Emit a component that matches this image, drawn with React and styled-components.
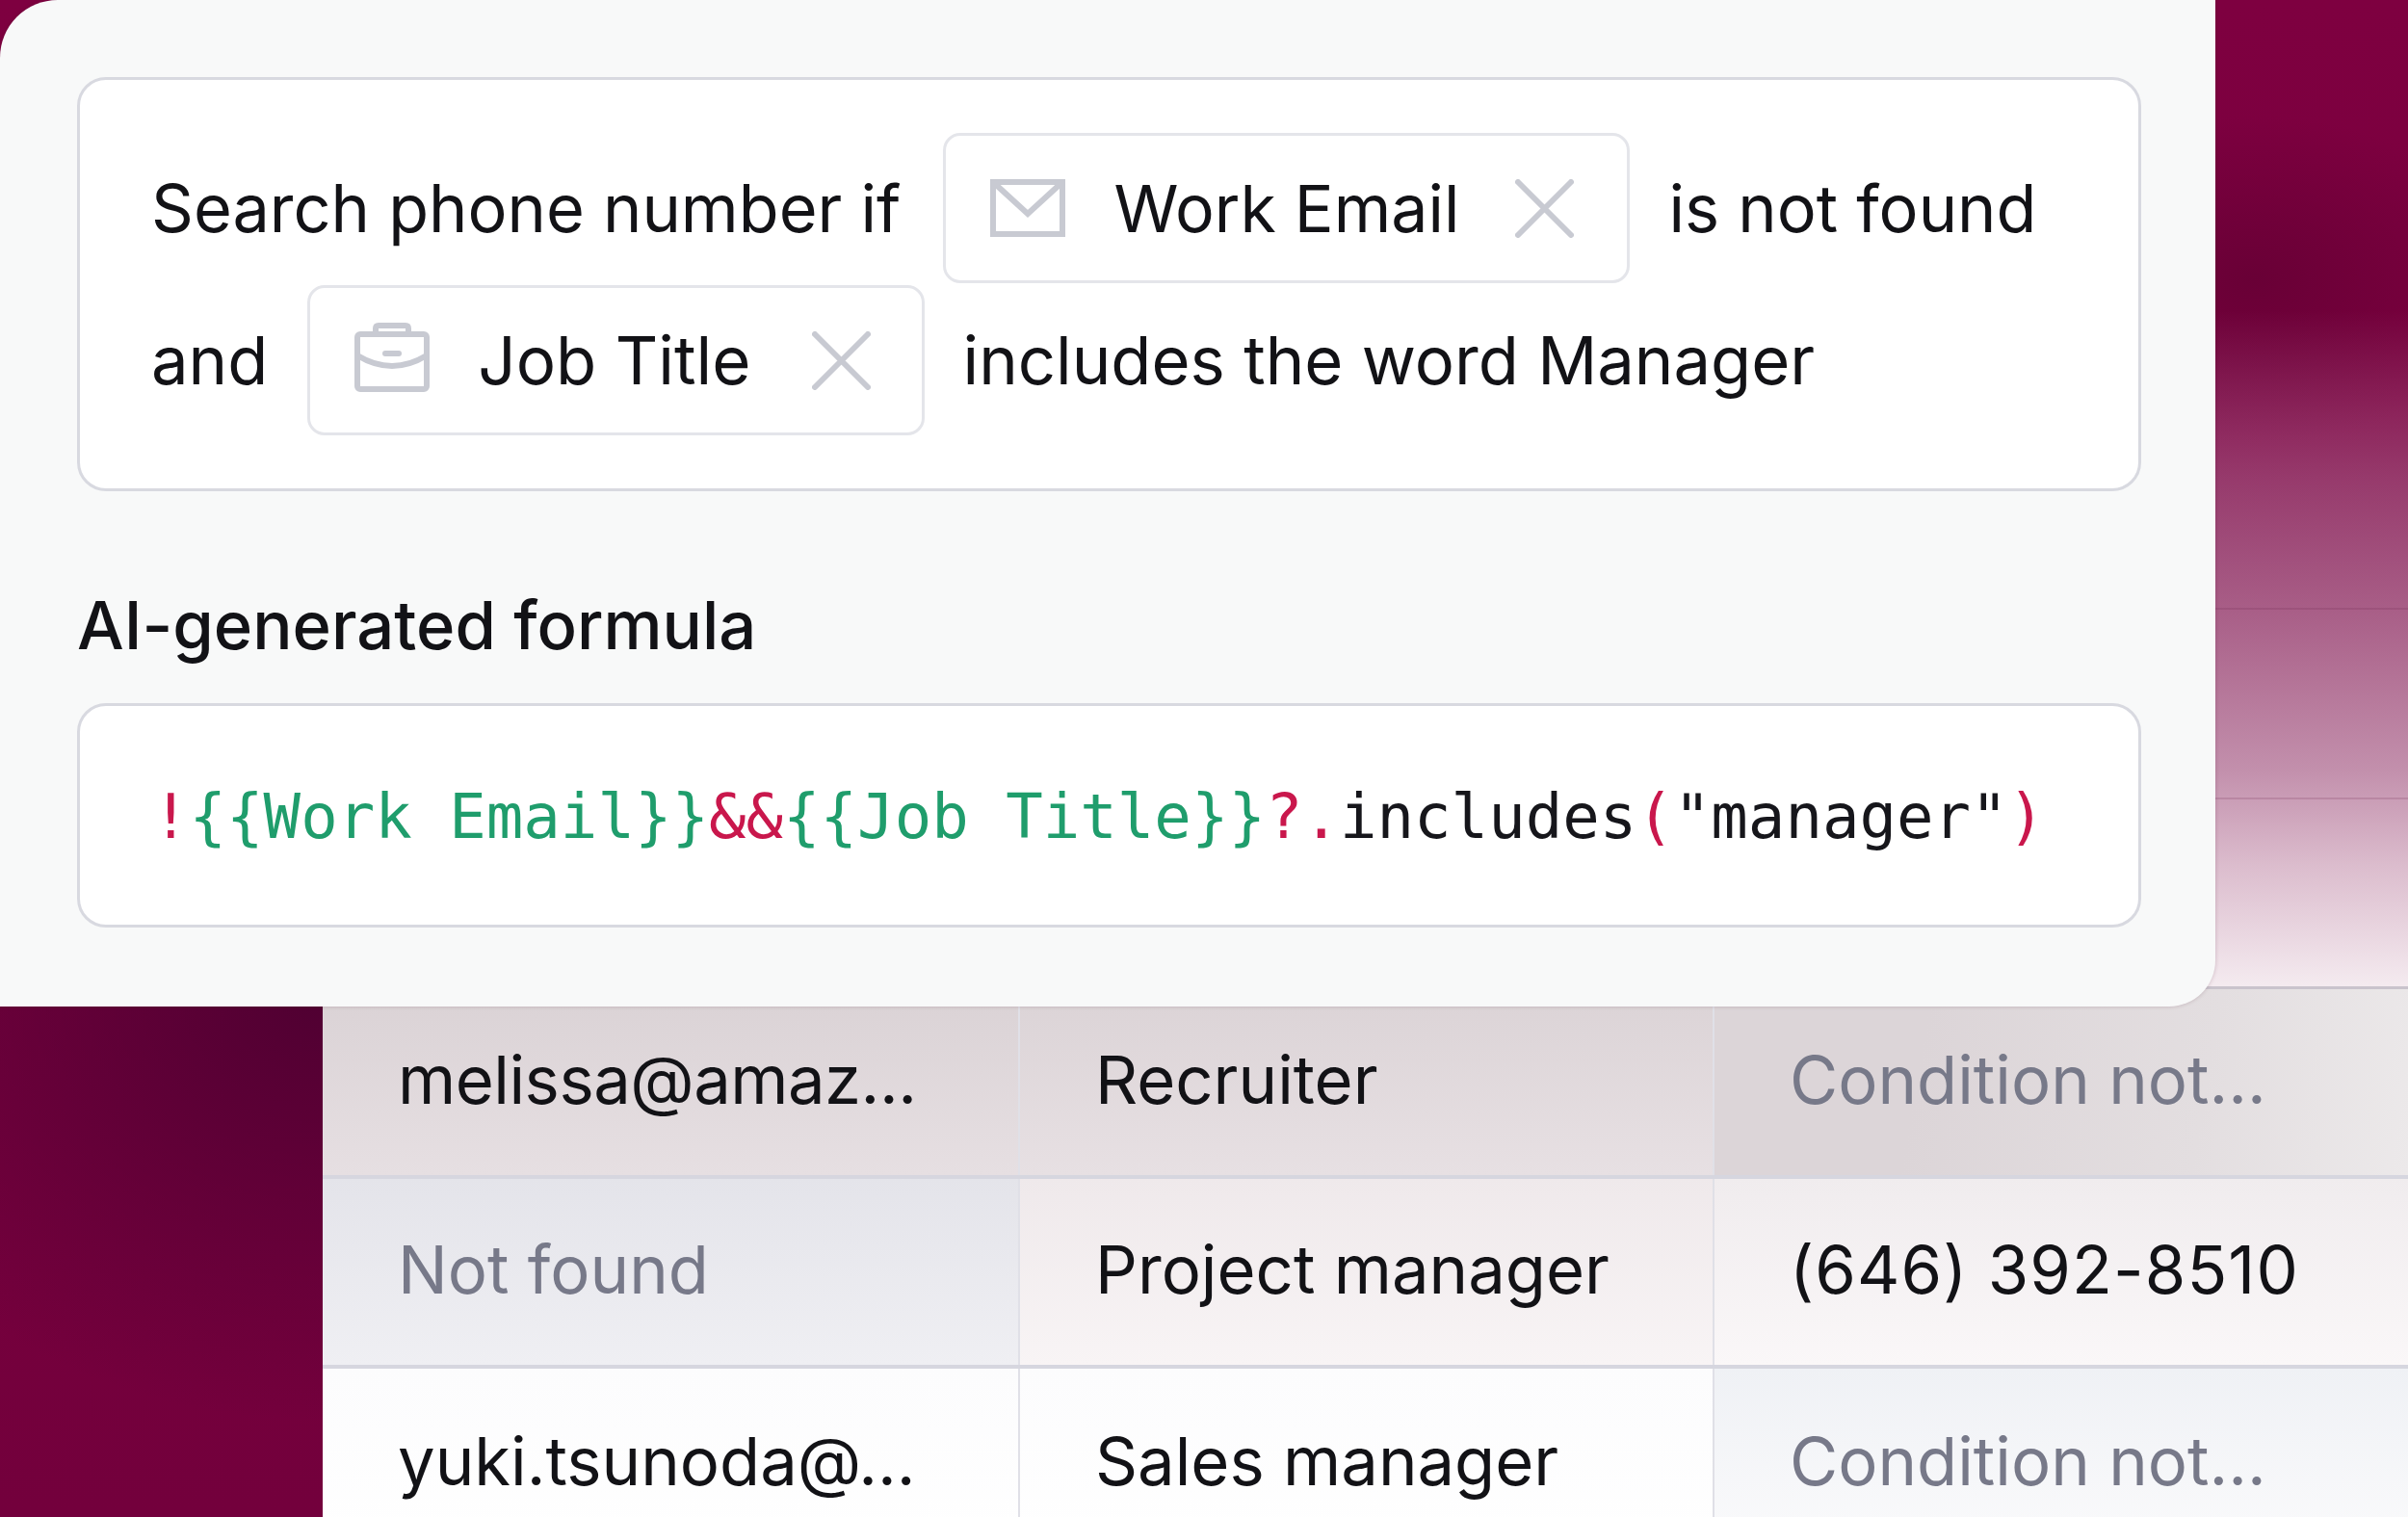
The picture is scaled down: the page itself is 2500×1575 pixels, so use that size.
import React from "react";
import styled, { createGlobalStyle } from "styled-components";

const GlobalStyle = createGlobalStyle`
  html, body {
    margin: 0;
    padding: 0;
    background: #77003c;
  }
  body {
    font-family: "Inter", "Liberation Sans", sans-serif;
  }
`;

const Stage = styled.div`
  position: relative;
  width: 2500px;
  height: 1575px;
  overflow: hidden;
  padding: 42px 0 0 335px;
  box-sizing: border-box;
  background:
    radial-gradient(ellipse 540px 440px at 330px 1035px, #500032 0%, rgba(80, 0, 50, 0) 100%),
    radial-gradient(ellipse 260px 170px at 2340px 290px, #690036 0%, rgba(105, 0, 54, 0) 100%),
    linear-gradient(180deg, #7e0040 0%, #73003c 100%);
`;

const Table = styled.div`
  display: flex;
  flex-direction: column;
  background: linear-gradient(
    180deg,
    rgba(225, 215, 230, 0) 280px,
    rgba(225, 215, 230, 0.12) 358px,
    rgba(228, 218, 232, 0.27) 458px,
    rgba(232, 222, 234, 0.42) 588px,
    rgba(236, 226, 236, 0.5) 658px,
    rgba(240, 232, 240, 0.62) 758px,
    rgba(248, 242, 246, 0.78) 858px,
    rgba(255, 255, 255, 0.92) 983px
  );
`;

const Row = styled.div`
  display: grid;
  grid-template-columns: 724px 721px 720px;
  height: ${(p) => p.$height}px;
  box-sizing: border-box;
  border-bottom: ${(p) => p.$line};
`;

const Cell = styled.div`
  display: flex;
  align-items: center;
  padding: 0 0 4px 78px;
  box-sizing: border-box;
  border-right: ${(p) => (p.$ruled ? "2px solid #e0e0e7" : "none")};
  font-size: 68.75px;
  line-height: 1;
  white-space: nowrap;
  letter-spacing: ${(p) => p.$spacing || 0}px;
  color: ${(p) => (p.$muted ? "#777989" : "#121216")};
  background: ${(p) => p.$fill || "none"};
`;

const Panel = styled.section`
  position: absolute;
  top: 0;
  left: 0;
  width: 2300px;
  height: 1045px;
  padding: 80px 77px 0 80px;
  box-sizing: border-box;
  background: #f8f9f9;
  border-radius: 60px 0 48px 0;
  box-shadow: 0 0 4px rgba(60, 0, 30, 0.2);
`;

const Card = styled.div`
  box-sizing: border-box;
  background: #fff;
  border: 3px solid #d8d9e0;
  border-radius: 30px;
`;

const ConditionCard = styled(Card)`
  height: 430px;
  padding: 55px 74px;
  display: flex;
  flex-direction: column;
  gap: 2px;
`;

const Line = styled.div`
  display: flex;
  align-items: center;
  gap: 40px;
  height: 156px;
  font-size: ${(p) => p.$size}px;
  color: #121216;
  white-space: nowrap;
`;

const Chip = styled.div`
  display: flex;
  align-items: center;
  height: 156px;
  box-sizing: border-box;
  margin-left: ${(p) => p.$nudge || 0}px;
  padding: 0 ${(p) => p.$right}px 0 46px;
  background: #fff;
  border: 3px solid #e4e5ea;
  border-radius: 18px;
`;

const ChipLabel = styled.span`
  margin: 0 ${(p) => p.$after}px 0 ${(p) => p.$before}px;
  font-size: ${(p) => p.$size}px;
`;

const Glyph = styled.svg`
  display: block;
  flex: none;
  fill: none;
  stroke: #c8cad2;
  stroke-width: 6;
`;

const FormulaLabel = styled.h2`
  margin: 95px 0 37px;
  font-size: 68.75px;
  font-weight: 500;
  line-height: 88px;
  color: #121216;
`;

const FormulaCard = styled(Card)`
  height: 233px;
  padding: 2px 75px 0;
  display: flex;
  align-items: center;
`;

const Code = styled.code`
  font-family: "DejaVu Sans Mono", "Liberation Mono", monospace;
  font-size: 64px;
  white-space: pre;
  color: #16161b;
`;

const Tok = styled.span`
  color: ${(p) => (p.$kind === "green" ? "#1f9d6c" : "#c9174c")};
`;

const MailIcon = () => (
  <Glyph width="78" height="60" viewBox="0 0 78 60">
    <rect x="3" y="3" width="72" height="54" />
    <path d="M3 3 L39 36 L75 3" />
  </Glyph>
);

const CaseIcon = () => (
  <Glyph width="78" height="78" viewBox="0 0 78 78">
    <rect x="3" y="12" width="72" height="57" rx="3" />
    <path d="M22 12 V6 Q22 3 25 3 H53 Q56 3 56 6 V12" />
    <path d="M3 34 Q39 56 75 34" />
    <path d="M32 32 H46" strokeLinecap="round" />
  </Glyph>
);

const CloseIcon = () => (
  <Glyph width="61" height="61" viewBox="0 0 61 61">
    <path d="M3 3 L58 58 M58 3 L3 58" strokeLinecap="round" />
  </Glyph>
);

const softLine = "4px solid #d6d6df";

const rows = [
  { height: 591, line: "2px solid rgba(110, 40, 80, 0.2)" },
  { height: 197, line: "2px solid rgba(110, 40, 80, 0.18)" },
  { height: 197, line: "3px solid rgba(190, 185, 195, 0.8)" },
  {
    height: 197,
    line: softLine,
    cells: [
      { text: "melissa@amaz...", spacing: -0.5, fill: "linear-gradient(180deg, #dad2d5, #e6dfe2)" },
      { text: "Recruiter", fill: "linear-gradient(180deg, #dbd3d6, #e7e0e3)" },
      {
        text: "Condition not...",
        muted: true,
        fill: "linear-gradient(100deg, #dcd5d8 30%, #e3dee0 70%, #ece9ea)",
      },
    ],
  },
  {
    height: 197,
    line: softLine,
    cells: [
      { text: "Not found", muted: true, fill: "linear-gradient(180deg, #e4e4ea, #efeff3)" },
      { text: "Project manager", fill: "linear-gradient(180deg, #efe9eb, #f8f4f5)" },
      { text: "(646) 392-8510", spacing: 1.1, fill: "linear-gradient(180deg, #f0ecee, #faf7f8)" },
    ],
  },
  {
    height: 197,
    line: "none",
    cells: [
      { text: "yuki.tsunoda@...", fill: "linear-gradient(180deg, #fcfcfd, #fff)" },
      { text: "Sales manager", fill: "linear-gradient(180deg, #fcfcfd, #fff)" },
      {
        text: "Condition not...",
        muted: true,
        fill: "linear-gradient(180deg, #eff1f5, #fbfbfc)",
      },
    ],
  },
];

export default function App() {
  return (
    <>
      <GlobalStyle />
      <Stage>
        <Table>
          {rows.map((row, i) => (
            <Row key={i} $height={row.height} $line={row.line}>
              {(row.cells || [{}, {}, {}]).map((cell, j) => (
                <Cell
                  key={j}
                  $muted={cell.muted}
                  $fill={cell.fill}
                  $spacing={cell.spacing}
                  $ruled={!!row.cells && j < 2}
                >
                  {cell.text}
                </Cell>
              ))}
            </Row>
          ))}
        </Table>
        <Panel>
          <ConditionCard>
            <Line $size={68.4}>
              <span>Search phone number if</span>
              <Chip $right={55} $nudge={4}>
                <MailIcon />
                <ChipLabel $before={50} $after={58} $size={68}>Work Email</ChipLabel>
                <CloseIcon />
              </Chip>
              <span>is not found</span>
            </Line>
            <Line $size={68.75}>
              <span>and</span>
              <Chip $right={53} $nudge={1}>
                <CaseIcon />
                <ChipLabel $before={50} $after={63} $size={69}>Job Title</ChipLabel>
                <CloseIcon />
              </Chip>
              <span>includes the word Manager</span>
            </Line>
          </ConditionCard>
          <FormulaLabel>AI-generated formula</FormulaLabel>
          <FormulaCard>
            <Code>
              <Tok>!</Tok>
              <Tok $kind="green">{"{{Work Email}}"}</Tok>
              <Tok>&amp;&amp;</Tok>
              <Tok $kind="green">{"{{Job Title}}"}</Tok>
              <Tok>?.</Tok>
              includes
              <Tok>(</Tok>
              "manager"
              <Tok>)</Tok>
            </Code>
          </FormulaCard>
        </Panel>
      </Stage>
    </>
  );
}
